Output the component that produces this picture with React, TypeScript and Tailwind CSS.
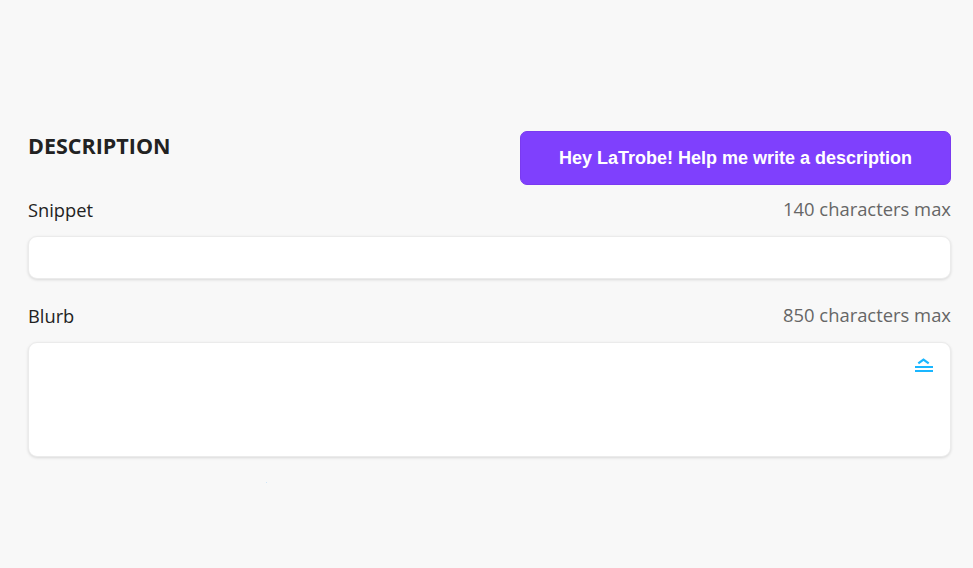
import React from 'react';

const labelFont = "font-['Open_Sans','Noto_Sans',sans-serif]";

function ExpandIcon() {
  return (
    <svg width="21" height="17" viewBox="0 0 21 17" fill="none" className="absolute right-[16px] top-[13.5px]">
      <path d="M5.3 6.4 L10.5 2.6 L15.7 6.4" stroke="#1ab6ff" strokeWidth="2.2" />
      <path d="M2 10 H20 M2 14 H20" stroke="#1ab6ff" strokeWidth="1.9" />
    </svg>
  );
}

export default function App() {
  return (
    <div className={`h-[568px] w-[973px] overflow-hidden bg-[#f8f8f8] ${labelFont}`}>
      <div className="flex flex-col pl-[28px] pr-[22px] pt-[131px]">
        <div className="flex items-start justify-between">
          <h2 className="text-[21.5px] font-bold leading-[29px] text-[#222222]">DESCRIPTION</h2>
          <button className="h-[54px] w-[431px] rounded-[7px] border border-[#7a3af0] bg-[#7f40fd] font-['Liberation_Sans',sans-serif] text-[18px] font-bold text-white">
            Hey LaTrobe! Help me write a description
          </button>
        </div>

        <div className="mt-[2px] flex h-[50px] items-start justify-between">
          <span className="text-[18.3px] leading-[46px] text-[#222222]">Snippet</span>
          <span className="text-[18.4px] leading-[44px] text-[#666666]">140 characters max</span>
        </div>
        <div className="-mt-[1px] h-[43px] rounded-[9px] border-[1.5px] border-[#ebebeb] bg-white shadow-[0_1px_3px_rgba(0,0,0,0.13)]" />

        <div className="mt-[14px] flex h-[50px] items-start justify-between">
          <span className="text-[18.3px] leading-[46px] text-[#222222]">Blurb</span>
          <span className="text-[18.4px] leading-[44px] text-[#666666]">850 characters max</span>
        </div>
        <div className="relative -mt-[1px] h-[115px] rounded-[9px] border-[1.5px] border-[#ebebeb] bg-white shadow-[0_1px_3px_rgba(0,0,0,0.13)]">
          <ExpandIcon />
        </div>
        <div className="ml-[238px] mt-[25px] h-[1px] w-[1px] bg-[#cfe6f7]" />
      </div>
    </div>
  );
}
